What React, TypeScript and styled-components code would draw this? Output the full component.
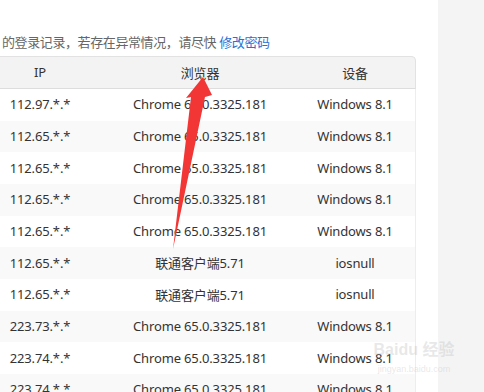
import styled, { createGlobalStyle } from "styled-components";

const GlobalStyle = createGlobalStyle`
  html, body {
    margin: 0;
    padding: 0;
    background: #ffffff;
    overflow: hidden;
  }
  body {
    font-family: "Noto Sans", "Noto Sans CJK SC", sans-serif;
  }
`;

type Record = { ip: string; browser: string; device: string };

const records: Record[] = [
  { ip: "112.97.*.*", browser: "Chrome 65.0.3325.181", device: "Windows 8.1" },
  { ip: "112.65.*.*", browser: "Chrome 65.0.3325.181", device: "Windows 8.1" },
  { ip: "112.65.*.*", browser: "Chrome 65.0.3325.181", device: "Windows 8.1" },
  { ip: "112.65.*.*", browser: "Chrome 65.0.3325.181", device: "Windows 8.1" },
  { ip: "112.65.*.*", browser: "Chrome 65.0.3325.181", device: "Windows 8.1" },
  { ip: "112.65.*.*", browser: "联通客户端5.71", device: "iosnull" },
  { ip: "112.65.*.*", browser: "联通客户端5.71", device: "iosnull" },
  { ip: "223.73.*.*", browser: "Chrome 65.0.3325.181", device: "Windows 8.1" },
  { ip: "223.74.*.*", browser: "Chrome 65.0.3325.181", device: "Windows 8.1" },
  { ip: "223.74.*.*", browser: "Chrome 65.0.3325.181", device: "Windows 8.1" },
];

export default function App() {
  return (
    <Page>
      <GlobalStyle />
      <Main>
        <Notice>
          的登录记录，若存在异常情况，请尽快 <a>修改密码</a>
        </Notice>
        <Table>
          <HeadRow>
            <Cell>IP</Cell>
            <Cell>浏览器</Cell>
            <Cell>设备</Cell>
          </HeadRow>
          {records.map((r, i) => (
            <Row key={i} $striped={i % 2 === 1}>
              <Cell>{r.ip}</Cell>
              <Cell>{r.browser}</Cell>
              <Cell>{r.device}</Cell>
            </Row>
          ))}
        </Table>
        {/* red annotation arrow pointing at the 浏览器 header */}
        <Arrow viewBox="0 0 484 392">
          <polygon points="203,77 212,95 205,97 173,249 191,97 186,98" fill="#f23535" />
        </Arrow>
        <Watermark>
          <span className="logo">Baidu 经验</span>
          <span className="url">jingyan.baidu.com</span>
        </Watermark>
      </Main>
      <Sidebar />
    </Page>
  );
}

const Page = styled.div`
  display: flex;
  width: 484px;
  height: 392px;
  overflow: hidden;
`;

const Main = styled.div`
  position: relative;
  width: 438px;
  padding-top: 32px;
  box-sizing: border-box;
`;

const Sidebar = styled.div`
  flex: 1;
  background: #f4f4f4;
`;

const Notice = styled.div`
  padding-left: 2px;
  height: 24px;
  line-height: 20px;
  font-size: 13px;
  letter-spacing: -0.4px;
  color: #666666;
  white-space: nowrap;

  a {
    color: #2b6fd3;
    cursor: pointer;
  }
`;

const Table = styled.div`
  margin-left: -25px;
  width: 440px;
  border-right: 1px solid #ededed;
  border-top-right-radius: 5px;
  font-size: 13px;
  letter-spacing: -0.15px;
  color: #333333;
`;

const Row = styled.div<{ $striped?: boolean }>`
  display: grid;
  grid-template-columns: 130px 190px 120px;
  height: 31.67px;
  align-items: center;
  background: ${(p) => (p.$striped ? "#f9f9f9" : "#ffffff")};
`;

const HeadRow = styled(Row)`
  height: 31px;
  background: #f3f3f3;
  border-top: 1px solid #e2e2e2;
  border-bottom: 1px solid #dddddd;
  border-top-right-radius: 5px;
  margin-right: -1px;
  border-right: 1px solid #e2e2e2;
`;

const Cell = styled.div`
  text-align: center;
  white-space: nowrap;
  padding-bottom: 1px;
`;

const Arrow = styled.svg`
  position: absolute;
  left: 0;
  top: 0;
  width: 484px;
  height: 392px;
  pointer-events: none;
`;

const Watermark = styled.div`
  position: absolute;
  left: 366px;
  top: 336px;
  width: 96px;
  display: flex;
  flex-direction: column;
  align-items: center;
  gap: 4px;
  color: rgba(190, 190, 190, 0.35);
  white-space: nowrap;
  pointer-events: none;

  .logo {
    font-family: "Liberation Sans", "Noto Sans CJK SC", sans-serif;
    font-size: 16px;
    font-weight: bold;
  }

  .url {
    font-family: "Liberation Sans", sans-serif;
    font-size: 9px;
  }
`;
